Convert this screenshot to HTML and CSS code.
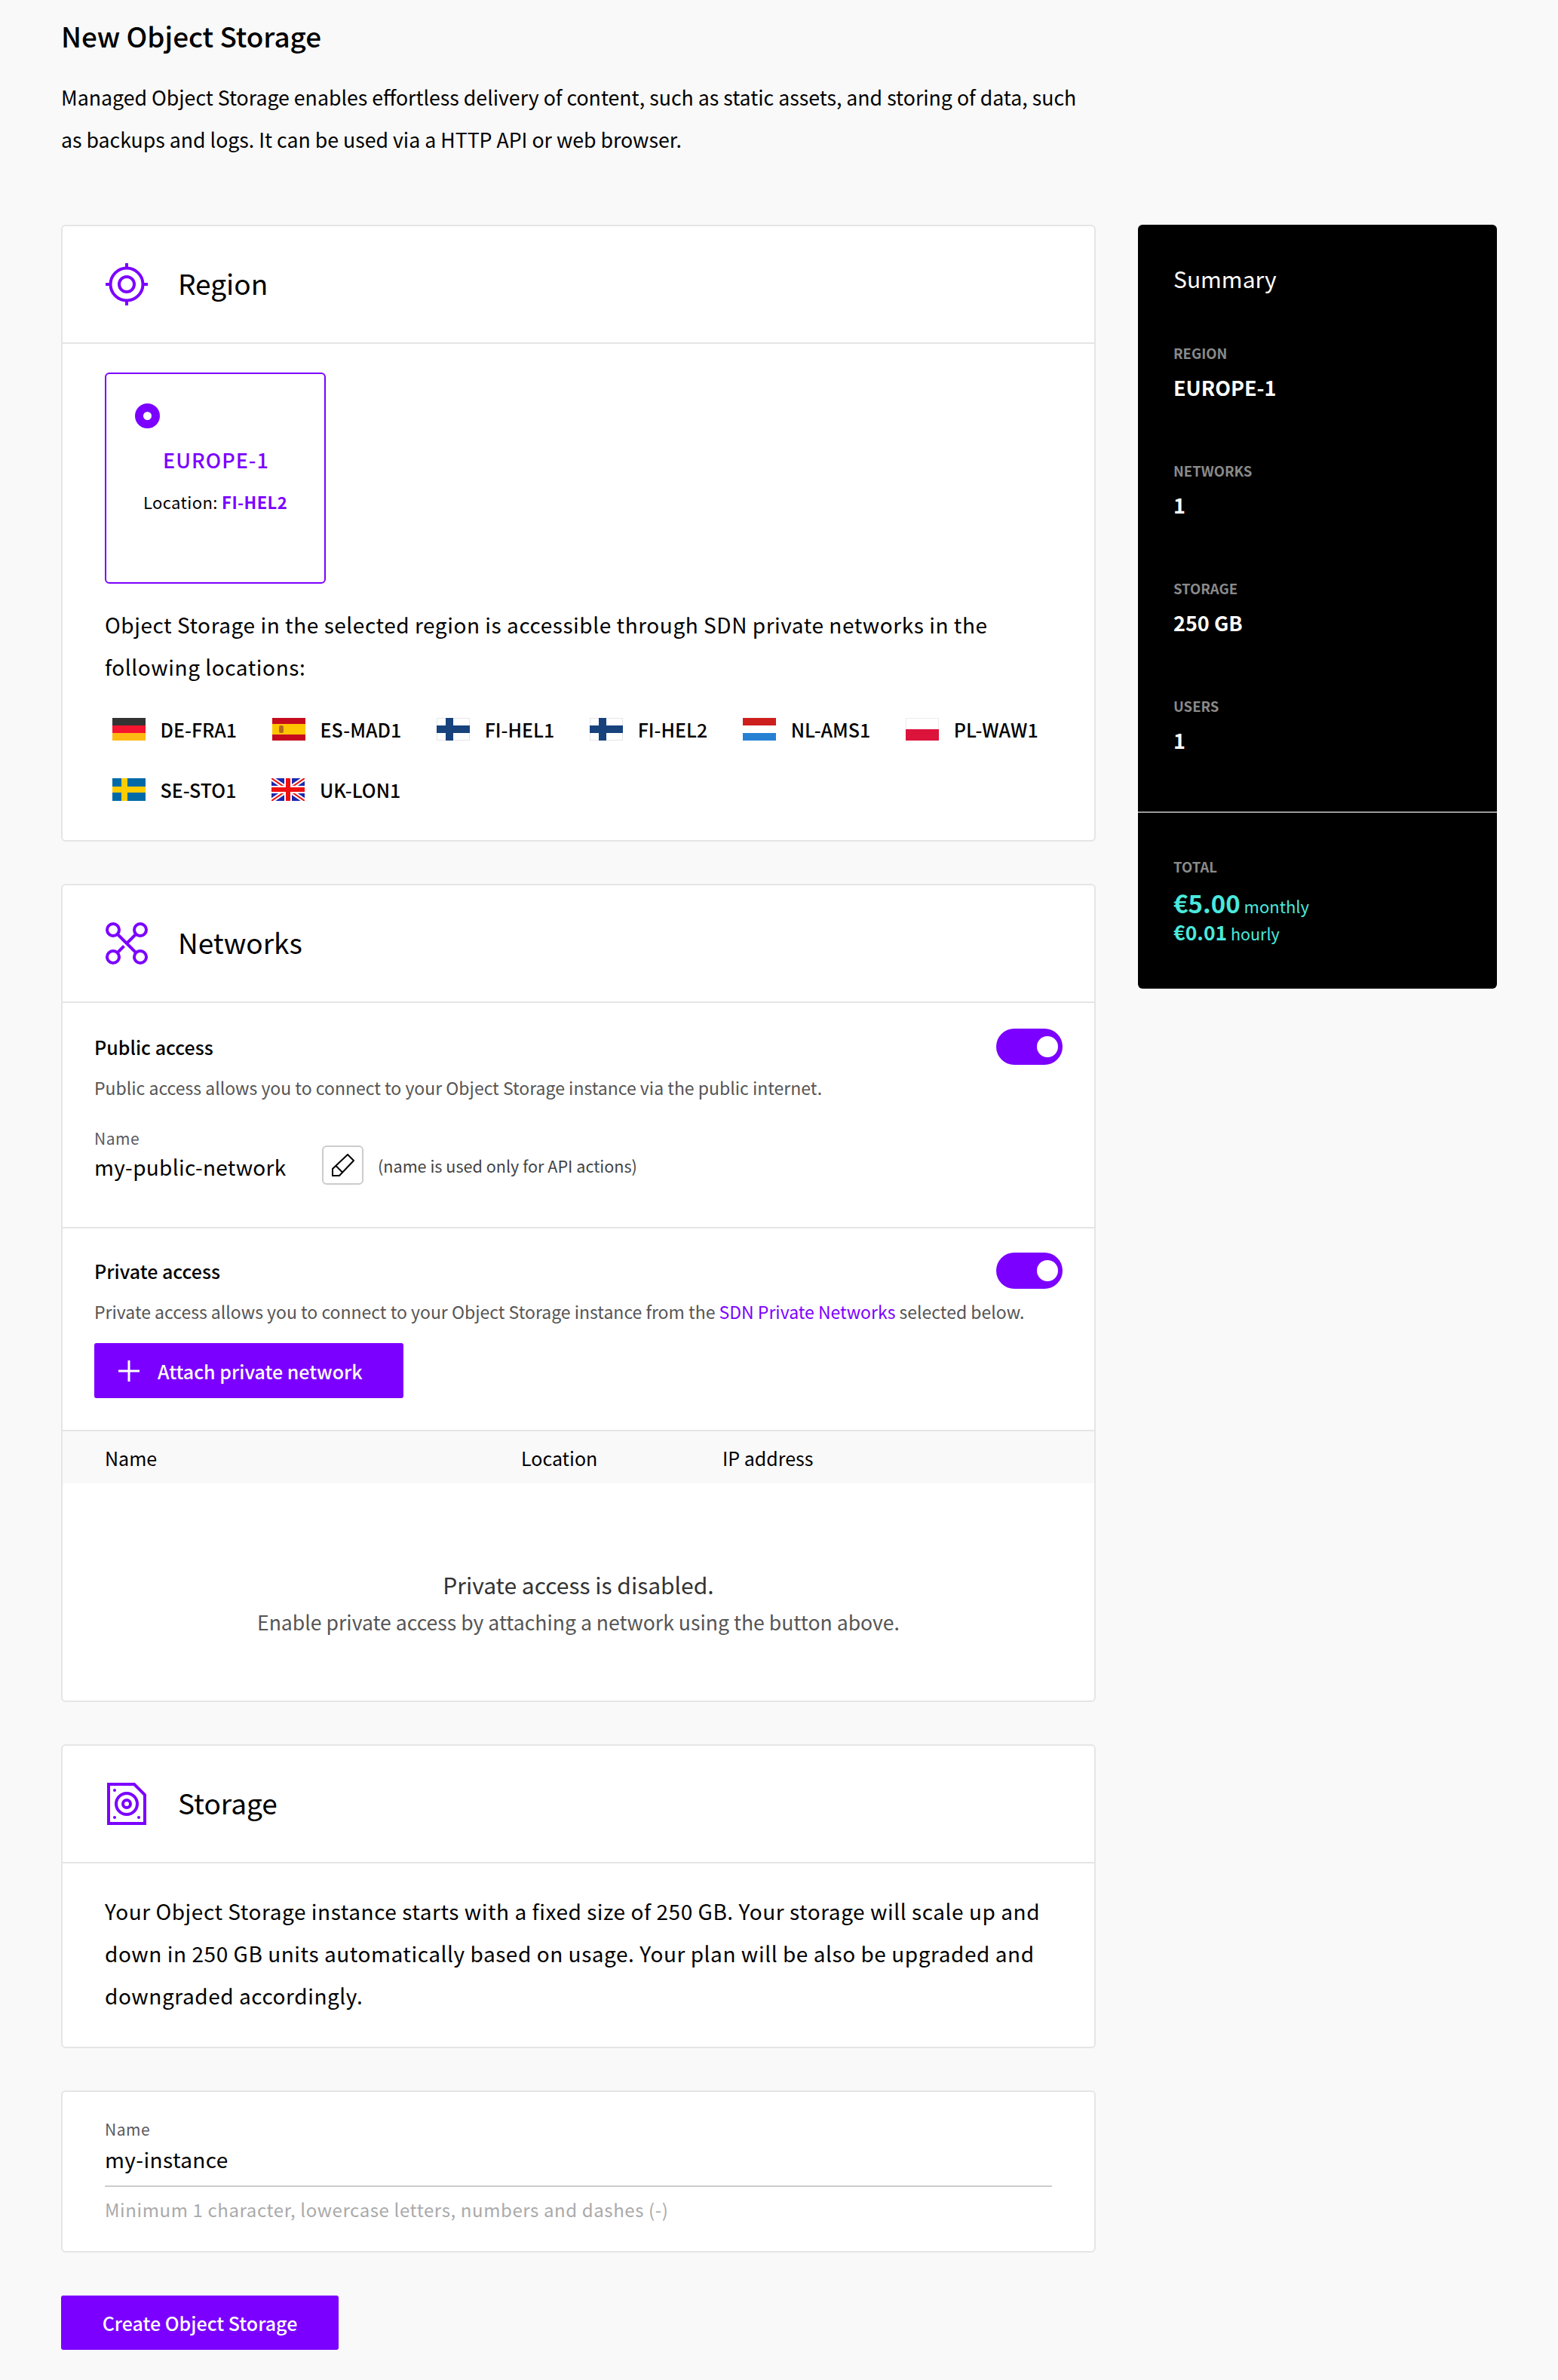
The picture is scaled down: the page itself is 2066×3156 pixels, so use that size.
FILE: index.html
```html
<!DOCTYPE html>
<html lang="en">
<head>
<meta charset="utf-8">
<title>New Object Storage</title>
<link rel="stylesheet" href="styles.css">
</head>
<body>
<div class="page">
  <header class="intro">
    <h1 class="title">New Object Storage</h1>
    <p class="lead">Managed Object Storage enables effortless delivery of content, such as static assets, and storing of data, such as backups and logs. It can be used via a HTTP API or web browser.</p>
  </header>
  <div class="layout">
    <main class="main">
      <section class="card region-card">
        <div class="card-head">
          <svg class="card-icon" viewBox="0 0 56 56" fill="none" stroke="#7b00ff" stroke-width="4"><circle cx="28" cy="28" r="21.5"/><circle cx="28" cy="28" r="10"/><path d="M28 0v6M28 50v6M0 28h6M50 28h6"/></svg>
          <h2 class="card-title">Region</h2>
        </div>
        <div class="region-body">
          <div class="tile">
            <span class="radio"></span>
            <div class="tile-name">EUROPE-1</div>
            <div class="tile-loc">Location: <b>FI-HEL2</b></div>
          </div>
          <p class="body-text region-text">Object Storage in the selected region is accessible through SDN private networks in the following locations:</p>
          <ul class="locs">
            <li class="loc"><svg class="flag" viewBox="0 0 44 30"><rect width="44" height="10" fill="#333"/><rect y="10" width="44" height="10" fill="#f5152f"/><rect y="20" width="44" height="10" fill="#ffb912"/></svg>DE-FRA1</li>
            <li class="loc"><svg class="flag" viewBox="0 0 44 30"><rect width="44" height="30" fill="#c60b1e"/><rect y="8" width="44" height="14" fill="#ffc400"/><rect x="9" y="10" width="6" height="10" rx="2" fill="#b5651d"/></svg>ES-MAD1</li>
            <li class="loc"><svg class="flag" viewBox="0 0 44 30"><rect x=".5" y=".5" width="43" height="29" fill="#fff" stroke="#e6e6ea"/><rect x="12" width="10" height="30" fill="#17427c"/><rect y="10" width="44" height="10" fill="#17427c"/></svg>FI-HEL1</li>
            <li class="loc"><svg class="flag" viewBox="0 0 44 30"><rect x=".5" y=".5" width="43" height="29" fill="#fff" stroke="#e6e6ea"/><rect x="12" width="10" height="30" fill="#17427c"/><rect y="10" width="44" height="10" fill="#17427c"/></svg>FI-HEL2</li>
            <li class="loc"><svg class="flag" viewBox="0 0 44 30"><rect width="44" height="10" fill="#ce1f1f"/><rect y="10" width="44" height="10" fill="#fff"/><rect y="20" width="44" height="10" fill="#2781d3"/></svg>NL-AMS1</li>
            <li class="loc"><svg class="flag" viewBox="0 0 44 30"><rect x=".5" y=".5" width="43" height="15" fill="#fff" stroke="#ececec"/><rect y="15" width="44" height="15" fill="#dc143c"/></svg>PL-WAW1</li>
            <li class="loc"><svg class="flag" viewBox="0 0 44 30"><rect width="44" height="30" fill="#006aa7"/><rect x="12" width="8" height="30" fill="#fecc00"/><rect y="11" width="44" height="8" fill="#fecc00"/></svg>SE-STO1</li>
            <li class="loc"><svg class="flag" viewBox="0 0 44 30"><rect width="44" height="30" fill="#1c28b0"/><path d="M0 0l44 30M44 0L0 30" stroke="#fff" stroke-width="6"/><path d="M0 0l44 30M44 0L0 30" stroke="#f01010" stroke-width="2"/><path d="M22 0v30M0 15h44" stroke="#fff" stroke-width="10"/><path d="M22 0v30M0 15h44" stroke="#f01010" stroke-width="6"/></svg>UK-LON1</li>
          </ul>
        </div>
      </section>

      <section class="card">
        <div class="card-head">
          <svg class="card-icon" viewBox="0 0 56 56" fill="none" stroke="#7b00ff" stroke-width="4"><circle cx="10" cy="10" r="8"/><circle cx="46" cy="10" r="8"/><circle cx="10" cy="46" r="8"/><circle cx="46" cy="46" r="8"/><path d="M16 16l24 24M40 16L28 28M24.500 31.500L16 40"/></svg>
          <h2 class="card-title">Networks</h2>
        </div>
        <div class="access public">
          <div class="access-row">
            <h3 class="access-title">Public access</h3>
            <span class="toggle"><span class="knob"></span></span>
          </div>
          <p class="desc">Public access allows you to connect to your Object Storage instance via the public internet.</p>
          <div class="name-label">Name</div>
          <div class="name-row">
            <span class="name-value">my-public-network</span>
            <button class="edit" type="button"><svg viewBox="0 0 30 30" width="30" height="30" fill="none" stroke="#000" stroke-width="2"><path d="M1 29v-9L21 1l8 8-19 20zM5 15.500l9.500 9.500"/></svg></button>
            <span class="name-note">(name is used only for API actions)</span>
          </div>
        </div>
        <div class="access private">
          <div class="access-row">
            <h3 class="access-title">Private access</h3>
            <span class="toggle"><span class="knob"></span></span>
          </div>
          <p class="desc">Private access allows you to connect to your Object Storage instance from the <a class="link">SDN Private Networks</a> selected below.</p>
          <button class="btn btn-attach" type="button"><svg viewBox="0 0 28 28" width="28" height="28" stroke="#fff" stroke-width="3"><path d="M14 0v28M0 14h28"/></svg>Attach private network</button>
        </div>
        <div class="table-head">
          <span class="col-name">Name</span>
          <span class="col-loc">Location</span>
          <span class="col-ip">IP address</span>
        </div>
        <div class="empty">
          <div class="empty-title">Private access is disabled.</div>
          <div class="empty-text">Enable private access by attaching a network using the button above.</div>
        </div>
      </section>

      <section class="card">
        <div class="card-head">
          <svg class="card-icon" viewBox="0 0 56 56"><path d="M4 2h34l14 14v38H4z" fill="none" stroke="#7b00ff" stroke-width="4"/><g fill="none" stroke="#7b00ff" stroke-width="4"><circle cx="28" cy="28" r="14"/><circle cx="28" cy="28" r="5"/></g><g fill="#7b00ff"><circle cx="12" cy="10" r="2"/><circle cx="12" cy="46" r="2"/><circle cx="44" cy="46" r="2"/></g></svg>
          <h2 class="card-title">Storage</h2>
        </div>
        <p class="body-text storage-text">Your Object Storage instance starts with a fixed size of 250 GB. Your storage will scale up and down in 250 GB units automatically based on usage. Your plan will be also be upgraded and downgraded accordingly.</p>
      </section>

      <section class="card name-card">
        <div class="field-label">Name</div>
        <div class="field-value">my-instance</div>
        <div class="field-hint">Minimum 1 character, lowercase letters, numbers and dashes (-)</div>
      </section>

      <button class="btn btn-create" type="button">Create Object Storage</button>
    </main>

    <aside class="summary">
      <div class="summary-top">
        <h2 class="summary-title">Summary</h2>
        <div class="sum-item"><div class="sum-label">REGION</div><div class="sum-value">EUROPE-1</div></div>
        <div class="sum-item"><div class="sum-label">NETWORKS</div><div class="sum-value">1</div></div>
        <div class="sum-item"><div class="sum-label">STORAGE</div><div class="sum-value">250 GB</div></div>
        <div class="sum-item"><div class="sum-label">USERS</div><div class="sum-value">1</div></div>
      </div>
      <div class="summary-total">
        <div class="sum-label">TOTAL</div>
        <div class="price-big"><b>€5.00</b> <span>monthly</span></div>
        <div class="price-small"><b>€0.01</b> <span>hourly</span></div>
      </div>
    </aside>
  </div>
</div>
</body>
</html>
```
FILE: styles.css
```css
* { box-sizing: border-box; }
html, body { margin: 0; padding: 0; }
body {
  background: #f9f9f9;
  color: #000;
  font-family: "Noto Sans CJK SC", "Noto Sans", sans-serif;
  font-size: 28px;
}
h1, h2, h3, p, ul { margin: 0; padding: 0; }
.page { padding: 27px 81px 40px; }
.title { font-size: 36.800px; line-height: 40px; font-weight: 500; }
.lead { width: 1372px; margin-top: 34px; line-height: 56px; font-size: 26.700px; }
.layout { display: flex; gap: 56px; align-items: flex-start; margin-top: 85px; }
.main { width: 1372px; display: flex; flex-direction: column; gap: 56px; align-items: flex-start; }
.card { width: 100%; background: #fff; border: 2px solid #e5e5e5; border-radius: 6px; }
.card-head { height: 154px; display: flex; align-items: center; gap: 40px; padding-left: 57px; border-bottom: 2px solid #e5e5e5; box-sizing: content-box; }
.card-icon { width: 56px; height: 56px; flex: none; }
.card-title { font-size: 37px; font-weight: 400; line-height: 50px; margin-top: -5px; }
.region-body { padding: 38px 56px 0; height: 658px; }
.tile { width: 293px; height: 280px; border: 2px solid #7b00ff; border-radius: 6px; padding-top: 39px; text-align: center; position: relative; }
.radio { position: absolute; left: 38px; top: 39px; width: 33px; height: 33px; border-radius: 50%; border: 11.5px solid #7b00ff; background: #fff; }
.tile-name { color: #7b00ff; font-size: 27px; font-weight: 500; letter-spacing: 1px; line-height: 40px; margin-top: 55px; padding-left: 2px; }
.tile-loc { font-size: 22px; letter-spacing: 0.4px; line-height: 30px; margin-top: 20px; }
.tile-loc b { color: #7b00ff; font-weight: 700; }
.body-text { font-size: 28px; line-height: 56px; letter-spacing: 0.55px; }
.region-text { margin-top: 26px; }
.locs { list-style: none; display: flex; flex-wrap: wrap; gap: 50px 47px; margin-top: 40px; padding-left: 10px; }
.loc { display: flex; align-items: center; gap: 19.500px; height: 30px; font-size: 25px; font-weight: 500; }
.flag { width: 44px; height: 30px; flex: none; }
.access { padding: 0 42px; }
.public { height: 299px; padding-top: 34px; border-bottom: 2px solid #e5e5e5; }
.private { height: 269px; padding-top: 32px; border-bottom: 2px solid #e5e5e5; }
.access-row { display: flex; justify-content: space-between; align-items: center; height: 48px; }
.access-title { font-size: 25px; font-weight: 500; line-height: 48px; }
.toggle { width: 88px; height: 48px; border-radius: 24px; background: #7b00ff; display: flex; justify-content: flex-end; align-items: center; padding-right: 6px; }
.knob { width: 28px; height: 28px; border-radius: 50%; background: #fff; }
.desc { font-size: 23px; line-height: 32px; color: #555; margin-top: 14px; }
.link { color: #7b00ff; }
.name-label { font-size: 21px; letter-spacing: 0.5px; line-height: 20px; color: #5a5a60; margin-top: 41px; }
.name-row { display: flex; align-items: center; height: 52px; }
.name-value { font-size: 28px; letter-spacing: 0.3px; width: 302px; padding-top: 4px; line-height: 40px; }
.edit { width: 55px; height: 52px; background: #fff; border: 2px solid #ccc; border-radius: 6px; padding: 0; display: flex; align-items: center; justify-content: center; }
.name-note { font-size: 21.600px; color: #444; margin-left: 19px; }
.btn { border: 0; border-radius: 3px; background: #7b00ff; color: #fff; font-family: inherit; font-size: 25px; font-weight: 500; display: flex; align-items: center; }
.btn-attach { width: 410px; height: 73px; margin-top: 26px; padding: 0 0 0 32px; gap: 24px; }
.table-head { height: 69px; background: #f9f9f9; display: flex; align-items: center; padding-left: 56px; font-size: 25px; }
.col-name { width: 552px; }
.col-loc { width: 267px; }
.empty { height: 288px; padding-top: 109px; text-align: center; }
.empty-title { font-size: 30px; line-height: 50px; color: #333; }
.empty-text { font-size: 26.600px; line-height: 50px; color: #555; }
.storage-text { padding: 35px 56px 40px; }
.name-card { padding: 34px 56px 0; height: 215px; }
.field-label { font-size: 21px; letter-spacing: 0.5px; line-height: 30px; color: #5a5a60; }
.field-value { font-size: 28px; letter-spacing: 0.4px; line-height: 50px; height: 62px; border-bottom: 2px solid #ccc; }
.field-hint { font-size: 24px; line-height: 32px; color: #aaa; margin-top: 14px; letter-spacing: 0.6px; }
.btn-create { width: 368px; height: 72px; justify-content: center; margin-top: 1px; }
.summary { width: 476px; height: 1013px; background: #000; color: #fff; border-radius: 6px; overflow: hidden; }
.summary-top { height: 780px; padding: 48px 47px 0; border-bottom: 2px solid #999; }
.summary-title { font-size: 30px; font-weight: 400; line-height: 46px; }
.sum-item { height: 156px; }
.sum-item:first-of-type { margin-top: 62px; }
.sum-label { font-size: 18.500px; font-weight: 700; color: #8a8a8a; line-height: 28px; }
.sum-value { font-size: 27px; font-weight: 700; line-height: 40px; margin-top: 12px; }
.summary-total { padding: 57px 47px 0; color: #4ae8dc; }
.price-big { font-size: 22px; height: 44px; line-height: 44px; margin-top: 12px; }
.price-big b { font-size: 33px; font-weight: 700; line-height: 44px; }
.price-small { font-size: 21.500px; height: 34px; line-height: 34px; }
.price-small b { font-size: 26.500px; font-weight: 700; line-height: 34px; }
```
